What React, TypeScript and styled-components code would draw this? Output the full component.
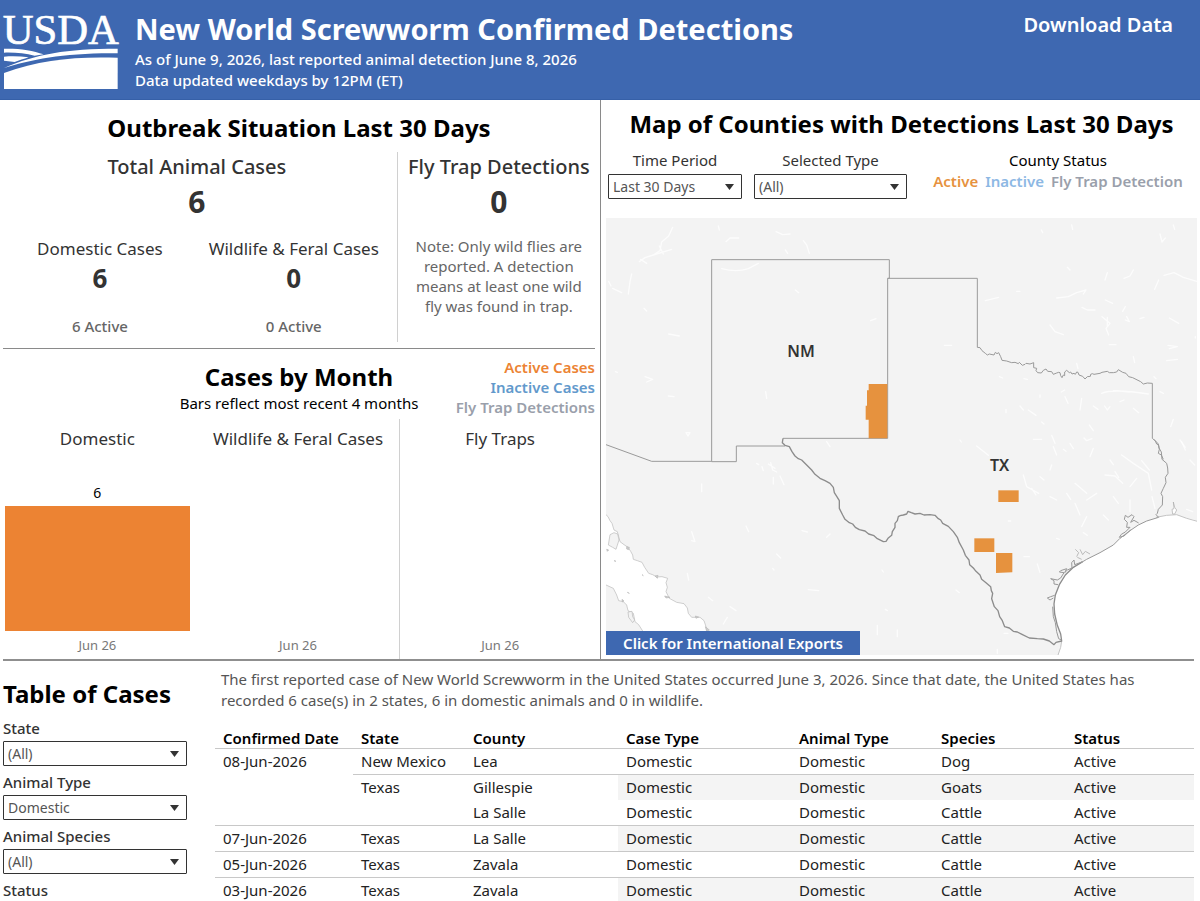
import React from "react";
import styled, { createGlobalStyle } from "styled-components";

const GlobalStyle = createGlobalStyle`
  *, *::before, *::after { box-sizing: border-box; }
  body {
    margin: 0;
    background: #fff;
    color: #333;
    font-family: "Noto Sans", "Open Sans", sans-serif;
    font-size: 15px;
    line-height: 20px;
  }
  h1, h2, h3, p, dl, dd, ul { margin: 0; padding: 0; }
`;

const Header = styled.header`
  display: flex;
  align-items: flex-start;
  height: 100px;
  padding: 0 27px 0 0;
  background: #3e68b1;
  border-bottom: 1px solid #3660a8;
  color: #fff;
`;

const LogoSvg = styled.svg`
  flex: none;
  width: 120px;
  height: 100px;
`;

const Heading = styled.div`
  flex: 1;
  padding: 9px 0 0 15px;
`;

const PageTitle = styled.h1`
  font-size: 29px;
  line-height: 40px;
  font-weight: 700;
`;

const HeaderNote = styled.p`
  font-size: 15px;
  line-height: 21px;
  font-weight: 500;
`;

const DownloadLink = styled.a`
  padding-top: 12px;
  color: #fff;
  font-size: 20px;
  line-height: 26px;
  font-weight: 600;
  text-decoration: none;
`;

const Panels = styled.main`
  display: grid;
  grid-template-columns: 601fr 596fr;
  margin-right: 3px;
`;

const LeftPanel = styled.div`
  display: flex;
  flex-direction: column;
  padding: 0 5px 0 3px;
  border-right: 1px solid #8a8a8a;
`;

const MapPanel = styled.section`
  padding: 8px 0 4px 5px;
`;

const SectionTitle = styled.h2`
  color: #000;
  font-size: 24px;
  line-height: 32px;
  font-weight: 700;
  text-align: center;
`;

const Situation = styled.section`
  height: 249px;
  padding-top: 12px;
  border-bottom: 1px solid #8a8a8a;
`;

const SituationGrid = styled.div`
  display: grid;
  grid-template-columns: 2fr 1fr;
  margin-top: 8px;
`;

const Totals = styled.div`
  height: 190px;
  padding-right: 6px;
  border-right: 1px solid #d0d0d0;
  text-align: center;
`;

const FlyTraps = styled.div`
  padding-left: 5px;
  text-align: center;
`;

const StatTitle = styled.h3`
  font-size: 20px;
  line-height: 30px;
  font-weight: 500;
  white-space: nowrap;
`;

const BigNumber = styled.p`
  font-size: 30px;
  line-height: 40px;
  font-weight: 700;
`;

const SplitStats = styled.div`
  display: grid;
  grid-template-columns: 1fr 1fr;
  margin-top: 14px;
`;

const StatLabel = styled.p`
  font-size: 17px;
  line-height: 26px;
`;

const MidNumber = styled.p`
  font-size: 26px;
  line-height: 32px;
  font-weight: 700;
`;

const StatFoot = styled.p`
  margin-top: 22px;
  color: #666;
  font-size: 15px;
  font-weight: 500;
`;

const FlyNote = styled.p`
  max-width: 180px;
  margin: 14px auto 0;
  color: #666;
`;

const Months = styled.section`
  display: flex;
  flex: 1;
  flex-direction: column;
`;

const MonthsHead = styled.div`
  display: grid;
  grid-template-columns: 1fr auto 1fr;
  height: 70px;
  padding-top: 8px;
`;

const MonthsTitle = styled.div`
  grid-column: 2;
  padding-top: 4px;
  color: #000;
  text-align: center;
`;

const CaseLegend = styled.ul`
  list-style: none;
  font-weight: 600;
  text-align: right;
  white-space: nowrap;
`;

const LegendItem = styled.li<{ $color: string }>`
  color: ${(p) => p.$color};
`;

const Charts = styled.div`
  display: grid;
  flex: 1;
  grid-template-columns: 189fr 204fr 190fr;
  column-gap: 5px;
`;

const Chart = styled.figure<{ $divided?: boolean }>`
  display: flex;
  flex-direction: column;
  margin: 0;
  padding: 6px 2px 4px;
  border-right: ${(p) => (p.$divided ? "1px solid #d0d0d0" : "0")};
  text-align: center;
`;

const ChartTitle = styled.figcaption`
  font-size: 17px;
  line-height: 28px;
`;

const Plot = styled.div`
  display: flex;
  flex: 1;
  flex-direction: column;
  justify-content: flex-end;
`;

const BarValue = styled.span`
  color: #000;
  font-size: 14px;
  line-height: 26px;
`;

const Bar = styled.div<{ $value: number }>`
  height: ${(p) => p.$value * 21 - 1}px;
  background: #ec8333;
`;

const AxisLabel = styled.span`
  padding-top: 4px;
  color: #787878;
  font-size: 13px;
  line-height: 20px;
`;

const MapControls = styled.div`
  display: flex;
  gap: 12px;
  padding: 10px 0 19px 2px;
`;

const Field = styled.label<{ $width?: number }>`
  display: flex;
  flex-direction: column;
  width: ${(p) => (p.$width ? `${p.$width}px` : "auto")};
  gap: 4px;
  text-align: center;
`;

const SideField = styled(Field)`
  gap: 3px;
  font-weight: 500;
  text-align: left;
`;

const SelectBox = styled.span`
  display: block;
  position: relative;

  svg {
    position: absolute;
    top: 10px;
    right: 8px;
    width: 9px;
    height: 6px;
    pointer-events: none;
  }
`;

const Select = styled.select`
  appearance: none;
  display: block;
  width: 100%;
  height: 25px;
  margin: 0;
  padding: 0 20px 0 4px;
  border: 1px solid #333;
  border-radius: 1px;
  background: #fff;
  color: #555;
  font: 400 14px/20px "Noto Sans", "Open Sans", sans-serif;
`;

const CountyStatus = styled.div`
  display: flex;
  flex: 1;
  flex-direction: column;
  gap: 1px;
  color: #000;
  text-align: center;
`;

const CountyLegend = styled.ul`
  display: flex;
  justify-content: center;
  gap: 7px;
  list-style: none;
  font-weight: 600;
  white-space: nowrap;
`;

const MapFrame = styled.div`
  position: relative;
`;

const MapSvg = styled.svg`
  display: block;
  width: 100%;
  height: auto;
`;

const ExportButton = styled.button`
  position: absolute;
  bottom: 0;
  left: 0;
  width: 254px;
  height: 24px;
  padding: 0;
  border: 0;
  background: #3e68b1;
  color: #fff;
  font: 600 15px/24px "Noto Sans", "Open Sans", sans-serif;
`;

const Cases = styled.section`
  display: grid;
  grid-template-columns: 184px 1fr;
  gap: 28px;
  margin: 0 6px 0 3px;
  border-top: 2px solid #8f8f8f;
`;

const Filters = styled.form`
  display: flex;
  flex-direction: column;
  gap: 6px;
  padding-top: 17px;

  h2 {
    margin-bottom: 2px;
    text-align: left;
  }
`;

const CasesBody = styled.div`
  padding-top: 8px;
`;

const Summary = styled.p`
  padding: 0 6px;
  color: #555;
  font-size: 15px;
  line-height: 21px;
`;

const Table = styled.table`
  width: 100%;
  margin-top: 17px;
  border-spacing: 0;
  table-layout: fixed;
  color: #222;
`;

const HeadCell = styled.th`
  height: 20px;
  padding: 0 8px;
  border-bottom: 1px solid #c8c8c8;
  color: #000;
  font-size: 15px;
  line-height: 20px;
  font-weight: 600;
  text-align: left;
  white-space: nowrap;
`;

const Cell = styled.td<{ $shaded?: boolean; $ruled?: boolean }>`
  height: ${(p) => (p.$ruled ? 26 : 25)}px;
  padding: 2px 8px;
  border-bottom: ${(p) => (p.$ruled ? "1px solid #c8c8c8" : "0")};
  background: ${(p) => (p.$shaded ? "#f4f4f4" : "transparent")};
  vertical-align: top;
  white-space: nowrap;
`;

const columns: [string, number][] = [
  ["Confirmed Date", 138],
  ["State", 112],
  ["County", 153],
  ["Case Type", 173],
  ["Animal Type", 142],
  ["Species", 133],
  ["Status", 128],
];

interface CaseRow {
  date?: string;
  dateSpan?: number;
  state?: string;
  stateSpan?: number;
  county: string;
  species: string;
  ruled: boolean;
}

const rows: CaseRow[] = [
  { date: "08-Jun-2026", dateSpan: 3, state: "New Mexico", county: "Lea", species: "Dog", ruled: true },
  { state: "Texas", stateSpan: 2, county: "Gillespie", species: "Goats", ruled: false },
  { county: "La Salle", species: "Cattle", ruled: true },
  { date: "07-Jun-2026", state: "Texas", county: "La Salle", species: "Cattle", ruled: true },
  { date: "05-Jun-2026", state: "Texas", county: "Zavala", species: "Cattle", ruled: true },
  { date: "03-Jun-2026", state: "Texas", county: "Zavala", species: "Cattle", ruled: false },
];

function DropDown({ options }: { options: string[] }) {
  return (
    <SelectBox>
      <Select defaultValue={options[0]}>
        {options.map((o) => (
          <option key={o}>{o}</option>
        ))}
      </Select>
      <svg viewBox="0 0 9 6" aria-hidden="true">
        <path d="M0 0H9L4.500 6Z" fill="#333" />
      </svg>
    </SelectBox>
  );
}

function Logo() {
  return (
    <LogoSvg viewBox="0 0 360 300" role="img" aria-label="USDA">
      <text x="8" y="132" fill="#fff" stroke="#fff" strokeWidth="2" fontFamily="Liberation Serif, serif" fontSize="128">
        USDA
      </text>
      <g fill="#fff">
        <path d="M12 146C60 145 98 151 131 163L104 167C76 160 45 157 12 158Z" />
        <path d="M12 170C38 168 62 169 86 172C72 177 57 181 44 186L12 182Z" />
        <path d="M12 204C108 162 198 146 353 146V160C196 158 96 178 12 204Z" />
        <path d="M12 219C122 179 222 169 353 173V267H12Z" />
      </g>
    </LogoSvg>
  );
}

/* Small inland lakes and reservoirs, drawn as short white strokes. */
const westLakes =
  "M218 52L206 78L185 96L180 122L160 135L135 143L118 155M160 135L215 118M178 108L190 132M122 148L140 160" +
  "M95 192L90 215L85 252M26 214L33 228M38 235L65 248M355 48L358 60M378 95L390 84L416 84M528 65L548 74L570 72" +
  "M610 92L620 105L628 130M556 120L563 130M365 176Q410 188 445 176L475 160M586 240L596 248M812 332L828 326" +
  "M132 295L140 303M206 372L238 378M135 500L158 508L140 516M205 558L222 560M497 545L500 565M46 485L52 487M258 668H270L264 678Z" +
  "M680 695L690 710";
const eastLakes =
  "M424 60L428 68M515 45L518 58M820 45L824 58M780 72L786 96L796 84M502 172L510 180M622 188L615 210M700 180L690 198L672 205" +
  "M792 196L822 188L850 202L890 214M776 210L764 238M470 264L505 260L530 248L558 240L550 252M256 272L296 262M350 244H360" +
  "M546 292L562 300H585M676 290L668 304M616 270L638 280M606 320L630 340L618 355L626 375M622 322V350M680 320L688 335L676 330" +
  "M720 326L732 322M808 324L836 340M450 345L465 365L490 374M804 406L832 410L808 416M886 380V384M133 406H155M628 404H648" +
  "M298 500L308 504M372 506L382 508M530 460L534 476M700 440L704 458M494 540L484 546M605 550Q640 535 745 552M640 542L690 546" +
  "M495 560L504 580M545 565L540 600M580 588L594 598M614 588L622 600L630 590M660 575L672 570M700 595L716 608" +
  "M318 598V608M360 588L370 600M385 600L408 616M425 636L432 642M820 628L812 650M568 645L580 662M552 684L560 692L576 686" +
  "M400 688H425M455 676L465 700M180 690L184 696M230 708L265 736M840 690L856 712M800 452L832 448M762 500L768 506M780 545L790 550M420 555V562";
const southEastLakes =
  "M460 20L470 45M510 10L520 26M455 75L450 90M370 105L380 140L416 160M395 145L408 165M525 130L560 160M615 105L645 108L668 130M645 95L656 112" +
  "M665 45L700 70L745 100L755 150M725 62L748 90M710 115L690 140M500 160L512 178M525 190L540 225M590 160L560 180M560 230L545 260" +
  "M640 170L655 190M690 180V215M610 225L625 240M550 278L562 286M470 295L478 298M372 350H388M412 372L420 398M325 243H332" +
  "M168 450L178 458M312 580H324M292 628V640M845 5L856 30M870 60L884 75M756 170L765 205M450 170L470 180M420 110L432 120" +
  "M860 208L878 215M490 28L498 34M580 25L570 50M630 60L640 74";
const mexicoLakes =
  "M305 132V155M275 275L285 305L275 302M438 258L446 275M606 272L622 276M680 292L690 282M530 342L542 354M518 385L522 390M262 400L266 420" +
  "M625 449L656 452M325 472L338 482M390 500L408 512M382 532L370 552M846 390L850 396M856 508L862 512M832 556V584M892 570V590" +
  "M512 68L518 90L530 96M520 112V132M540 108L552 134M486 80L490 92M470 70L476 74M505 72L525 85";

function DetectionMap() {
  return (
    <MapSvg viewBox="0 0 1773 1311" role="img" aria-label="Counties with detections in New Mexico and Texas">
      <rect width="1773" height="1311" fill="#f3f3f3" />
      <g fill="none" stroke="#fff" strokeOpacity="0.75" strokeWidth="4" strokeLinejoin="round" strokeLinecap="round">
        <path transform="translate(-18 -24)" d={westLakes} />
        <path transform="translate(882 -24)" d={eastLakes} />
        <path transform="translate(882 666)" d={southEastLakes} />
        <path transform="translate(-18 666)" d={mexicoLakes} />
      </g>

      <g transform="translate(-18 666)" fill="#fff" stroke="#b8b8b8" strokeWidth="2" strokeLinejoin="round">
        <path d="M16 222L24 230L30 242L36 250L42 270L52 275L60 305L72 314L84 322L92 334L98 345L100 358L112 362L126 367L134 382L146 400L158 404L170 411L186 410L203 415L198 428L202 442L198 455L208 475L230 487L252 491L262 504L265 520L275 532L300 532L312 542L318 560L326 590L330 660H150L128 573L116 554L105 545L100 520L84 512L80 495L70 485L56 482L50 465L40 445L16 434Z" />
        <path fill="#f3f3f3" d="M30 284L42 278L53 282L57 300L48 328L38 322L25 315Z" />
        <path fill="#f3f3f3" d="M84 516L96 514L98 530L104 540L98 548L86 532Z" />
        <path fill="#ccc" d="M80 320L88 322L86 329L80 327ZM194 468L210 472L198 474ZM165 408L174 406L172 415ZM286 528L296 531L288 535ZM20 328L26 330L22 334ZM66 478L72 483L67 486ZM82 457L88 460ZM42 362L48 364ZM126 404L130 407ZM316 560L328 570L320 574Z" />
      </g>
      <g transform="translate(882 666)">
        <path
          fill="#fff"
          d="M892 244L876 237L860 235L830 224L800 226L768 234L740 243L715 255L690 272L660 295L640 315L600 338L560 358L525 378L500 400L480 430L465 465L461 500L468 540L478 575L485 603L482 620L475 648H894Z"
        />
        <path d="M768 232L800 226L830 224L860 235L892 244M485 603L482 622L474 645" fill="none" stroke="#c4c4c4" strokeWidth="3" />
        <path d="M818 222L816 208L822 206L820 186L824 202L830 210L824 222Z" fill="#fff" stroke="#aaa" strokeWidth="2" />
      </g>

      <g fill="none" stroke="#9a9a9a" strokeWidth="3" strokeLinejoin="round">
        <path transform="translate(-18 666)" d="M18 14L155 64H335" />
        <path transform="translate(-18 -24)" d="M549 685H863V205H868V149H335V755H409V708H555" />
        <path
          transform="translate(882 -24)"
          d="M-37 205H232V412L240 413L246 422L256 430L262 435L268 432L282 435L286 427L291 431L296 428L302 440L306 451L320 453L335 458L345 457L355 461L358 457L367 466L375 463L378 460L390 462L401 458L401 473L410 475L408 482L413 488L424 489L430 481L438 477L443 484L455 485L460 493L470 489L476 487L480 488L482 497L486 503L490 495L494 497L494 486L500 481L508 488L512 486L516 492L522 490L526 493L530 486L534 487L537 495L548 499L555 507L562 500L571 499L572 493L577 491L582 493L600 490L606 487L622 484L628 488L640 488L650 486L655 479L668 487L678 490L686 500L698 503L708 508L722 515L730 522L742 519L757 520V685L766 693L770 702L776 706L778 718L775 730L784 735L790 748"
        />
      </g>
      <g fill="none" stroke="#8c8c8c" strokeWidth="4" strokeLinejoin="round">
        <path
          transform="translate(-18 666)"
          d="M549 -5L547 8L555 16L568 20L576 35L585 48L595 56L605 60L620 75L635 90L645 103L660 115L675 122L690 130L700 142L703 158L712 172L718 182L718 205L728 225L735 238L748 248L758 252L766 262L778 269L795 273L806 282L822 287L832 296L850 305L858 304L864 295L875 286L877 275L885 262L885 250L892 242L895 230L900 227"
        />
        <path
          transform="translate(882 666)"
          d="M0 227L10 225L20 222L24 214L34 218L45 222L60 220L72 225L90 224L105 226L115 236L122 240L128 250L145 259L160 275L172 292L178 308L190 330L196 346L207 360L209 374L220 384L228 394L240 405L245 418L258 428L272 440L274 452L278 460L275 476L283 500L294 512L299 530L307 542L314 560L328 564L340 574L352 576L366 583L388 594L412 596L430 597L448 603L462 614L468 607L485 603L482 582L472 556L464 522L462 492L466 465L478 434L496 405L520 382L548 365"
        />
      </g>
      <g transform="translate(882 666)" fill="none" stroke="#999" strokeWidth="3" strokeLinejoin="round">
        <path d="M762 -2L775 12L777 24L784 36L786 58L800 70L803 84L804 100L796 112L798 128L790 145L783 160L788 170L787 195L775 208L772 220L768 224L776 232L740 243L715 255L690 272L660 295L640 315L600 338L560 358L540 370" />
        <path d="M716 249L702 241L692 247L702 230L696 224L684 232L676 226L673 238L682 247L680 262L690 262L676 276L664 283L658 292L672 288L692 270" />
        <path d="M546 366L524 374L522 360L515 368L516 384L502 390L494 398L500 386L482 392L478 396L492 398L482 414L472 420L452 416L462 422L462 432L474 434" />
        <path d="M464 466L452 470L442 474L450 480L460 474M458 500L460 530L466 548L470 575L476 596L484 600" />
        <path d="M526 328L536 338L530 350M540 328L548 344L556 334L570 342M532 352L545 358" stroke="#bbb" />
      </g>

      <g fill="#e6923e">
        <path transform="translate(-18 -24)" d="M806 522H862V685H806V629H797V587H801V541H806Z" />
        <rect x="1177" y="817" width="61" height="35" />
        <rect x="1105" y="961" width="60" height="41" />
        <path d="M1170 1005H1219V1063L1170 1065Z" />
      </g>
      <g fill="#333" fontFamily="Noto Sans, sans-serif" fontSize="48" fontWeight="600" textAnchor="middle">
        <text x="585" y="416">NM</text>
        <text x="1181" y="759">TX</text>
      </g>
    </MapSvg>
  );
}

function MonthChart({ title, value, divided }: { title: string; value: number; divided?: boolean }) {
  return (
    <Chart $divided={divided}>
      <ChartTitle>{title}</ChartTitle>
      <Plot>
        {value > 0 && (
          <>
            <BarValue>{value}</BarValue>
            <Bar $value={value} />
          </>
        )}
      </Plot>
      <AxisLabel>Jun 26</AxisLabel>
    </Chart>
  );
}

export default function App() {
  return (
    <>
      <GlobalStyle />
      <Header>
        <Logo />
        <Heading>
          <PageTitle>New World Screwworm Confirmed Detections</PageTitle>
          <HeaderNote>As of June 9, 2026, last reported animal detection June 8, 2026</HeaderNote>
          <HeaderNote>Data updated weekdays by 12PM (ET)</HeaderNote>
        </Heading>
        <DownloadLink href="#download">Download Data</DownloadLink>
      </Header>

      <Panels>
        <LeftPanel>
          <Situation>
            <SectionTitle>Outbreak Situation Last 30 Days</SectionTitle>
            <SituationGrid>
              <Totals>
                <StatTitle>Total Animal Cases</StatTitle>
                <BigNumber>6</BigNumber>
                <SplitStats>
                  <div>
                    <StatLabel>Domestic Cases</StatLabel>
                    <MidNumber>6</MidNumber>
                    <StatFoot>6 Active</StatFoot>
                  </div>
                  <div>
                    <StatLabel>Wildlife &amp; Feral Cases</StatLabel>
                    <MidNumber>0</MidNumber>
                    <StatFoot>0 Active</StatFoot>
                  </div>
                </SplitStats>
              </Totals>
              <FlyTraps>
                <StatTitle>Fly Trap Detections</StatTitle>
                <BigNumber>0</BigNumber>
                <FlyNote>Note: Only wild flies are reported. A detection means at least one wild fly was found in trap.</FlyNote>
              </FlyTraps>
            </SituationGrid>
          </Situation>

          <Months>
            <MonthsHead>
              <MonthsTitle>
                <SectionTitle>Cases by Month</SectionTitle>
                <p>Bars reflect most recent 4 months</p>
              </MonthsTitle>
              <CaseLegend>
                <LegendItem $color="#ec8333">Active Cases</LegendItem>
                <LegendItem $color="#6299cc">Inactive Cases</LegendItem>
                <LegendItem $color="#9a9fab">Fly Trap Detections</LegendItem>
              </CaseLegend>
            </MonthsHead>
            <Charts>
              <MonthChart title="Domestic" value={6} />
              <MonthChart title="Wildlife &amp; Feral Cases" value={0} divided />
              <MonthChart title="Fly Traps" value={0} />
            </Charts>
          </Months>
        </LeftPanel>

        <MapPanel>
          <SectionTitle>Map of Counties with Detections Last 30 Days</SectionTitle>
          <MapControls>
            <Field $width={134}>
              Time Period
              <DropDown options={["Last 30 Days", "All Dates"]} />
            </Field>
            <Field $width={153}>
              Selected Type
              <DropDown options={["(All)", "Domestic", "Wildlife"]} />
            </Field>
            <CountyStatus>
              <p>County Status</p>
              <CountyLegend>
                <LegendItem $color="#e6923e">Active</LegendItem>
                <LegendItem $color="#8db8e4">Inactive</LegendItem>
                <LegendItem $color="#9a9fab">Fly Trap Detection</LegendItem>
              </CountyLegend>
            </CountyStatus>
          </MapControls>
          <MapFrame>
            <DetectionMap />
            <ExportButton type="button">Click for International Exports</ExportButton>
          </MapFrame>
        </MapPanel>
      </Panels>

      <Cases>
        <Filters>
          <SectionTitle>Table of Cases</SectionTitle>
          <SideField>
            State
            <DropDown options={["(All)", "New Mexico", "Texas"]} />
          </SideField>
          <SideField>
            Animal Type
            <DropDown options={["Domestic", "Wildlife"]} />
          </SideField>
          <SideField>
            Animal Species
            <DropDown options={["(All)", "Cattle", "Dog", "Goats"]} />
          </SideField>
          <SideField as="div">Status</SideField>
        </Filters>
        <CasesBody>
          <Summary>
            The first reported case of New World Screwworm in the United States occurred June 3, 2026. Since that date,
            the United States has recorded 6 case(s) in 2 states, 6 in domestic animals and 0 in wildlife.
          </Summary>
          <Table>
            <colgroup>
              {columns.map(([name, width]) => (
                <col key={name} width={width} />
              ))}
            </colgroup>
            <thead>
              <tr>
                {columns.map(([name]) => (
                  <HeadCell key={name} scope="col">
                    {name}
                  </HeadCell>
                ))}
              </tr>
            </thead>
            <tbody>
              {rows.map((row, i) => {
                const shaded = i % 2 === 1;
                return (
                  <tr key={i}>
                    {row.date && (
                      <Cell rowSpan={row.dateSpan} $ruled={row.ruled}>
                        {row.date}
                      </Cell>
                    )}
                    {row.state && (
                      <Cell rowSpan={row.stateSpan} $ruled={row.ruled || !!row.stateSpan}>
                        {row.state}
                      </Cell>
                    )}
                    <Cell $ruled={row.ruled}>{row.county}</Cell>
                    <Cell $ruled={row.ruled} $shaded={shaded}>Domestic</Cell>
                    <Cell $ruled={row.ruled} $shaded={shaded}>Domestic</Cell>
                    <Cell $ruled={row.ruled} $shaded={shaded}>{row.species}</Cell>
                    <Cell $ruled={row.ruled} $shaded={shaded}>Active</Cell>
                  </tr>
                );
              })}
            </tbody>
          </Table>
        </CasesBody>
      </Cases>
    </>
  );
}
